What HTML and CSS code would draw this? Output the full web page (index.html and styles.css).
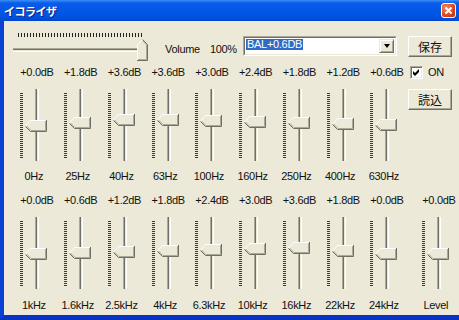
FILE: index.html
```html
<!DOCTYPE html>
<html lang="ja">
<head>
    <meta charset="UTF-8">
    <title>イコライザ</title>
    <link rel="stylesheet" href="styles.css">
</head>
<body>
    <svg class="defs" width="0" height="0">
        <symbol id="vthumb" viewBox="0 0 22 12">
            <path d="M0.5 5.5 L5.5 0.5 H21.5 V11.5 H5.5 Z" fill="#ECE9D8"/>
            <path d="M0.5 6 L5.5 0.5 H21" stroke="#fff" fill="none"/>
            <path d="M21.5 0 V11.5 H5.5 L0.5 6.5" stroke="#716F64" fill="none"/>
            <path d="M20.5 1 V10.5 H6 L1.5 6" stroke="#ACA899" fill="none"/>
        </symbol>
        <symbol id="hthumb" viewBox="0 0 11 22">
            <path d="M0.5 21.5 V5.5 L5.5 0.5 L10.5 5.5 V21.5 Z" fill="#ECE9D8"/>
            <path d="M0.5 21 V5.5 L5.5 0.5" stroke="#fff" fill="none"/>
            <path d="M5.5 0.5 L10.5 5.5 V21.5 H0" stroke="#716F64" fill="none"/>
            <path d="M5.5 1.9 L9.5 5.9 V20.5 H1" stroke="#ACA899" fill="none"/>
        </symbol>
    </svg>

    <div class="window">
        <div class="titlebar">
            <span class="title">イコライザ</span>
            <span class="close">
                <svg width="11" height="11" viewBox="0 0 11 11">
                    <path d="M2.5 2.5 L8.5 8.5 M8.5 2.5 L2.5 8.5" stroke="#fff" stroke-width="2"/>
                </svg>
            </span>
        </div>

        <div class="client">
            <div class="upper">
                <div class="main">
                    <div class="volrow">
                        <div class="volume">
                            <div class="hticks"></div>
                            <div class="htrack"></div>
                            <svg class="hthumb" width="11" height="22"><use href="#hthumb"/></svg>
                        </div>
                        <div class="voltext"><span>Volume</span><span>100%</span></div>
                        <div class="combo">
                            <div class="combo-in">
                                <span class="combo-text">BAL+0.6DB</span>
                                <span class="combo-btn"><i class="arrow"></i></span>
                            </div>
                        </div>
                    </div>
                    <div class="bands" id="upperBands"></div>
                </div>

                <div class="side">
                    <div class="btn">保存</div>
                    <label class="check-row">
                        <span class="checkbox">
                            <svg width="7" height="7" viewBox="0 0 7 7"><polygon points="0,2 2,4 6,0 6,3 2,7 0,5" fill="#000"/></svg>
                        </span>
                        ON
                    </label>
                    <div class="btn btn-load">読込</div>
                </div>
            </div>

            <div class="bands lower" id="lowerBands"></div>
        </div>
    </div>

    <script>
const upper = [
    ['+0.0dB', '0Hz'], ['+1.8dB', '25Hz'], ['+3.6dB', '40Hz'],
    ['+3.6dB', '63Hz'], ['+3.0dB', '100Hz'], ['+2.4dB', '160Hz'],
    ['+1.8dB', '250Hz'], ['+1.2dB', '400Hz'], ['+0.6dB', '630Hz']
];
const lower = [
    ['+0.0dB', '1kHz'], ['+0.6dB', '1.6kHz'], ['+1.2dB', '2.5kHz'],
    ['+1.8dB', '4kHz'], ['+2.4dB', '6.3kHz'], ['+3.0dB', '10kHz'],
    ['+3.6dB', '16kHz'], ['+1.8dB', '22kHz'], ['+0.0dB', '24kHz'],
    ['+0.0dB', 'Level']
];

// one pixel of thumb travel per 0.6dB step
function makeBand(db, label) {
    const band = document.createElement('div');
    band.className = label === 'Level' ? 'band level' : 'band';
    const top = 31 - Math.round(parseFloat(db) / 0.6);
    band.innerHTML =
        `<span class="db">${db}</span>
        <div class="slider">
            <div class="ticks"></div>
            <div class="track"></div>
            <svg class="thumb" width="22" height="12" style="top:${top}px"><use href="#vthumb"/></svg>
        </div>
        <span class="hz">${label}</span>`;
    return band;
}

const upperBox = document.getElementById('upperBands');
const lowerBox = document.getElementById('lowerBands');
upper.forEach(([db, label]) => upperBox.appendChild(makeBand(db, label)));
lower.forEach(([db, label]) => lowerBox.appendChild(makeBand(db, label)));
    </script>
</body>
</html>
```

FILE: styles.css
```css
body {
    margin: 0;
    background: #fff;
    font-family: "Liberation Sans", Arial, sans-serif;
    font-size: 11px;
    letter-spacing: -0.3px;
    color: #111;
}

.defs {
    position: absolute;
}

.window {
    width: 459px;
    height: 320px;
    display: flex;
    flex-direction: column;
    overflow: hidden;
}

/* title bar */
.titlebar {
    flex: none;
    height: 21px;
    display: flex;
    align-items: center;
    justify-content: space-between;
    padding: 0 3px 0 4px;
    background: linear-gradient(#3d8ff7, #0a5ce8 3px, #0055e5 14px, #0050dc 18px, #0046cc);
}

.title {
    font-family: "Noto Sans CJK JP", sans-serif;
    font-weight: bold;
    font-size: 11px;
    color: #fff;
    text-shadow: 1px 1px #0a1e80;
    letter-spacing: -0.5px;
}

.close {
    width: 13px;
    height: 13px;
    border: 1px solid #fff;
    border-radius: 3px;
    background: radial-gradient(circle at 30% 30%, #ef8a6a, #d9461f 60%, #b8320f);
    display: flex;
    align-items: center;
    justify-content: center;
}

/* client area */
.client {
    flex: 1;
    background: #ECE9D8;
    border-left: 4px solid #0841d6;
    border-bottom: 5px solid #0833c4;
}

.upper {
    display: flex;
}

.main {
    width: 404px;
    flex: none;
}

.volrow {
    display: flex;
    align-items: flex-start;
    height: 44px;
}

.volume {
    position: relative;
    width: 134px;
    margin-left: 9px;
    padding-top: 12px;
}

.hticks {
    width: 126px;
    height: 4px;
    margin-left: 5px;
    background: repeating-linear-gradient(90deg, #222 0 1px, transparent 1px 3px);
}

.htrack {
    height: 1px;
    margin-top: 11px;
    background: #716F64;
    border-top: 1px solid #ACA899;
    border-bottom: 1px solid #ECE9D8;
    box-shadow: 0 1px #fff;
}

.hthumb {
    position: absolute;
    left: 124px;
    top: 18px;
}

.voltext {
    display: flex;
    gap: 10px;
    margin: 22px 0 0 18px;
    line-height: 13px;
}

/* combo */
.combo {
    width: 152px;
    height: 18px;
    margin: 15px 11px 0 auto;
    border: 1px solid;
    border-color: #ACA899 #fff #fff #ACA899;
}

.combo-in {
    height: 14px;
    display: flex;
    align-items: flex-start;
    padding: 1px;
    border: 1px solid;
    border-color: #716F64 #ECE9D8 #ECE9D8 #716F64;
    background: #fff;
}

.combo-text {
    background: #316AC5;
    color: #fff;
    line-height: 11px;
    padding: 0 1px;
}

.combo-btn {
    box-sizing: border-box;
    width: 15px;
    height: 14px;
    margin-left: auto;
    display: flex;
    align-items: center;
    justify-content: center;
    background: #ECE9D8;
    border: 1px solid;
    border-color: #ECE9D8 #716F64 #716F64 #ECE9D8;
    box-shadow: inset 1px 1px #fff, inset -1px -1px #ACA899;
}

.arrow {
    width: 0;
    height: 0;
    border-left: 3.5px solid transparent;
    border-right: 3.5px solid transparent;
    border-top: 4px solid #000;
}

/* equalizer bands */
.bands {
    display: flex;
    padding-left: 11px;
}

.band {
    width: 43.75px;
    flex: none;
    display: flex;
    flex-direction: column;
    align-items: center;
}

.band.level {
    margin-left: 8.25px;
}

.db,
.hz {
    height: 14px;
    line-height: 14px;
    white-space: nowrap;
}

.hz {
    padding-right: 6px;
}

.slider {
    position: relative;
    height: 72px;
    display: flex;
    margin: 10px 0 8px;
    padding-right: 15px;
}

.lower .slider {
    margin-bottom: 9px;
}

.ticks {
    width: 3px;
    height: 65px;
    margin: 4px 12px 0 0;
    background: repeating-linear-gradient(#3a3a3a 0 1px, transparent 1px 2px);
}

.track {
    width: 1px;
    height: 72px;
    background: #716F64;
    border-left: 1px solid #ACA899;
    border-right: 1px solid #ECE9D8;
    box-shadow: 1px 0 #fff;
}

.thumb {
    position: absolute;
    left: 5px;
}

.lower {
    margin-top: 10px;
}

/* right side buttons */
.side {
    width: 44px;
    flex: none;
    display: flex;
    flex-direction: column;
    align-items: flex-start;
}

.btn {
    box-sizing: border-box;
    width: 44px;
    height: 21px;
    margin-top: 15px;
    display: flex;
    align-items: center;
    justify-content: center;
    font-family: "Noto Sans CJK JP", sans-serif;
    font-size: 12px;
    letter-spacing: 0;
    background: #ECE9D8;
    border: 1px solid;
    border-color: #fff #716F64 #716F64 #fff;
    box-shadow: inset -1px -1px #ACA899;
}

.btn-load {
    margin-top: 10px;
}

.check-row {
    display: flex;
    align-items: center;
    gap: 5px;
    height: 13px;
    margin: 9px 0 0 2px;
    line-height: 13px;
}

.checkbox {
    box-sizing: border-box;
    width: 13px;
    height: 13px;
    display: flex;
    align-items: center;
    justify-content: center;
    background: #fff;
    border: 1px solid;
    border-color: #ACA899 #fff #fff #ACA899;
    box-shadow: inset 1px 1px #716F64, inset -1px -1px #ECE9D8;
}
```
